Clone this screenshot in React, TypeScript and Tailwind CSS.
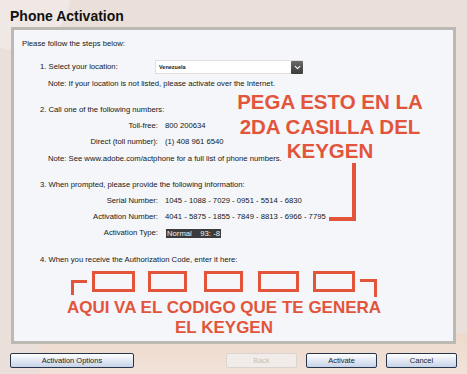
import { ChevronDown } from 'lucide-react'

const orange = 'text-[#e2553a]'

function InfoRow({ label, value, hl }: { label: string; value: string; hl?: boolean }) {
  return (
    <div className="flex h-[16px] items-center">
      <span className="w-[144px] text-right">{label}</span>
      <span
        className={
          hl
            ? 'ml-[8px] whitespace-pre bg-[#3b3b3b] px-[1px] leading-[9px] text-[#f2f2f2]'
            : 'ml-[7px]'
        }
      >
        {value}
      </span>
    </div>
  )
}

function Btn({ label, width, disabled }: { label: string; width: string; disabled?: boolean }) {
  return (
    <div
      className={`flex h-[15px] items-center justify-center rounded-[2px] border text-[7.5px] ${width} ${
        disabled
          ? 'border-[#d9d4d0] bg-[#f1ece9] text-[#c4bfbb]'
          : 'border-[#27354a] bg-gradient-to-b from-[#ffffff] to-[#c6d3e8] text-[#1c1c1c]'
      }`}
    >
      {label}
    </div>
  )
}

export default function App() {
  const boxes = [
    { w: 'w-[43px]', ml: 'ml-[78px]' },
    { w: 'w-[39px]', ml: 'ml-[13px]' },
    { w: 'w-[39px]', ml: 'ml-[17px]' },
    { w: 'w-[41px]', ml: 'ml-[15px]' },
    { w: 'w-[42px]', ml: 'ml-[14px]' },
  ]

  return (
    <div className="relative h-[374px] w-[467px] overflow-hidden bg-[#ebdfd9] font-['Liberation_Sans',Arial,sans-serif] text-[#161616]">
      {/* faded decoration */}
      <div className="absolute -left-[40px] -top-[60px] h-[110px] w-[110px] rounded-full bg-[#f0e8e4]" />
      <div className="absolute bottom-0 left-[40px] h-[40px] w-[430px] bg-gradient-to-b from-[#efd9cc] to-[#f1e2d8]" />

      <div className="relative">
        <h1 className="pl-[10px] pt-[8px] text-[14px] font-bold leading-[16px] text-[#111]">Phone Activation</h1>

        {/* panel */}
        <div className="ml-[11px] mt-[3px] h-[317px] w-[445px] border-[3px] border-[#bcb8b4] bg-[#f4f6fa] text-[7.7px]">
          <div className="mt-[6px] flex h-[16px] items-center pl-[8px]">Please follow the steps below:</div>

          <div className="mt-[7px] flex h-[16px] items-center pl-[26px]">
            <span className="w-[115px]">1. Select your location:</span>
            <div className="flex h-[14px] w-[148px] items-center border border-[#e3dedb] bg-white">
              <span className="flex-1 pl-[3px] text-[5.5px] font-bold text-[#222]">Venezuela</span>
              <span className="mr-[-1px] flex h-[13px] w-[12px] items-center justify-center rounded-[1px] bg-gradient-to-b from-[#6a6a6a] to-[#3c3c3c]">
                <ChevronDown size={9} strokeWidth={3} color="#ffffff" />
              </span>
            </div>
          </div>

          <div className="mt-[1px] flex h-[16px] items-center pl-[34px]">
            Note: If your location is not listed, please activate over the Internet.
          </div>

          <div className="mt-[10px] flex h-[16px] items-center pl-[26px]">2. Call one of the following numbers:</div>
          <InfoRow label="Toll-free:" value="800 200634" />
          <InfoRow label="Direct (toll number):" value="(1) 408 961 6540" />
          <div className="mt-[1px] flex h-[16px] items-center pl-[34px]">
            Note: See www.adobe.com/actphone for a full list of phone numbers.
          </div>

          <div className="mt-[10px] flex h-[16px] items-center pl-[26px]">
            3. When prompted, please provide the following information:
          </div>
          <InfoRow label="Serial Number:" value="1045 - 1088 - 7029 - 0951 - 5514 - 6830" />
          <InfoRow label="Activation Number:" value="4041 - 5875 - 1855 - 7849 - 8813 - 6966 - 7795" />
          <InfoRow label="Activation Type:" value="Normal    93: -8" hl />

          <div className="mt-[11px] flex h-[16px] items-center pl-[26px]">
            4. When you receive the Authorization Code, enter it here:
          </div>

          <div className="mt-[3px] flex h-[21px]">
            {boxes.map((b, i) => (
              <div key={i} className={`h-[21px] border-[3px] border-[#e2553a] ${b.w} ${b.ml}`} />
            ))}
          </div>
        </div>

        {/* buttons */}
        <div className="mt-[9px] flex pl-[10px]">
          <Btn label="Activation Options" width="w-[124px]" />
          <div className="ml-[92px] flex gap-[9px]">
            <Btn label="Back" width="w-[71px]" disabled />
            <Btn label="Activate" width="w-[71px]" />
            <Btn label="Cancel" width="w-[71px]" />
          </div>
        </div>
      </div>

      {/* keygen annotations */}
      <div className={`absolute left-[230px] top-[90px] w-[200px] text-center text-[20.5px] font-bold leading-[24.5px] ${orange}`}>
        PEGA ESTO EN LA
        <br />
        2DA CASILLA DEL
        <br />
        KEYGEN
      </div>
      <div className="absolute left-[352px] top-[163px] h-[58px] w-[4px] bg-[#e2553a]" />
      <div className="absolute left-[329px] top-[217px] h-[4px] w-[27px] bg-[#e2553a]" />

      <div className="absolute left-[71px] top-[280px] h-[15px] w-[3px] bg-[#e2553a]" />
      <div className="absolute left-[71px] top-[280px] h-[3px] w-[16px] bg-[#e2553a]" />
      <div className="absolute left-[374px] top-[279px] h-[18px] w-[3px] bg-[#e2553a]" />
      <div className="absolute left-[360px] top-[279px] h-[3px] w-[17px] bg-[#e2553a]" />

      <div className={`absolute left-[44px] top-[298px] w-[360px] text-center text-[17px] font-bold leading-[19.5px] ${orange}`}>
        AQUI VA EL CODIGO QUE TE GENERA
        <br />
        EL KEYGEN
      </div>
    </div>
  )
}
